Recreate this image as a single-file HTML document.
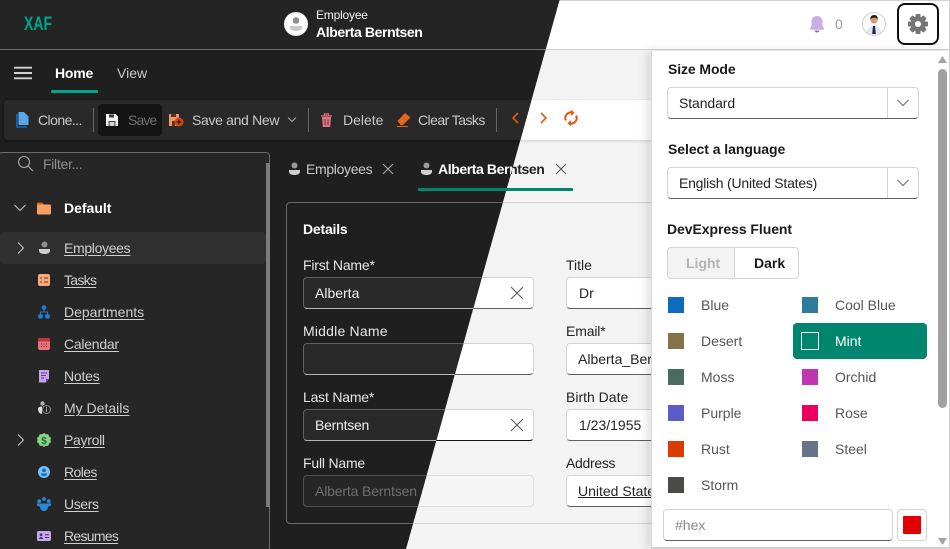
<!DOCTYPE html>
<html><head><meta charset="utf-8"><style>
html,body{margin:0;padding:0}
body{width:950px;height:549px;overflow:hidden;position:relative;font-family:"Liberation Sans",sans-serif;font-size:14px;background:#f3f3f3}
.l{position:absolute;inset:0;overflow:hidden;width:950px;height:549px}
#dark{background:#1f1f1f;color:#e6e6e6;clip-path:polygon(0 0,559.5px 0,406px 549px,0 549px)}
#light{background:#f3f3f3;color:#242424}
.a{position:absolute}
.t{position:absolute;line-height:20px;height:20px;white-space:nowrap}
.b{font-weight:700}
.in{position:absolute;box-sizing:border-box;height:32px;border-radius:4px;border:1px solid}
#dark .in{background:#292929;border-color:#5f5f5f;border-bottom-color:#b5b5b5}
#light .in{background:#fff;border-color:#d4d4d4;border-bottom-color:#616161}
svg{position:absolute;display:block}
.nav{text-decoration:underline;text-underline-offset:2px;color:#cfcfcf}
.sw{position:absolute;width:16px;height:16px}
.c{position:absolute;line-height:20px;height:20px;color:#555;white-space:nowrap}
</style></head><body>

<div class="l" id="light">
  <div class="a" style="left:0;top:0;width:950px;height:49px;background:#fff;border-top:1px solid #d1d1d1;box-sizing:border-box"></div>
  <div class="a" style="left:0;top:49px;width:950px;height:1px;background:#d1d1d1"></div>
  <div class="a" style="left:0;top:100px;width:660px;height:40px;background:#fff;box-shadow:0 1px 3px rgba(0,0,0,.15)"></div>
  <svg style="left:537px;top:110px" width="12" height="16" viewBox="0 0 12 16"><path d="M4 3l5 5-5 5" fill="none" stroke="#dd5a10" stroke-width="1.600"/></svg>
  <svg style="left:563px;top:110px" width="16" height="16" viewBox="0 0 16 16" fill="none" stroke="#dd5a10" stroke-width="2"><path d="M3 10.500A5.400 5.400 0 0 1 9.500 2.800M13 5.500a5.400 5.400 0 0 1-6.500 7.700"/><path d="M8 .5l2.500 2.300L8 5M8 11l-2.500 2.200L8 15.500" stroke-width="1.500"/></svg>

  <span class="t b" style="left:438px;top:159px;letter-spacing:-.4px">Alberta Berntsen</span>
  <svg style="left:555px;top:163px" width="12" height="12" viewBox="0 0 12 12"><path d="M1 1l10 10M11 1L1 11" stroke="#555" stroke-width="1"/></svg>
  <div class="a" style="left:418px;top:188px;width:155px;height:3px;background:#008571;border-radius:1px"></div>

  <div class="a" style="left:286px;top:202px;width:500px;height:322px;border:1px solid #d1d1d1;border-radius:4px;box-sizing:border-box"></div>
  <div class="in" style="left:303px;top:277px;width:231px"></div>
  <svg style="left:510px;top:286px" width="14" height="14" viewBox="0 0 14 14"><path d="M1 1l12 12M13 1L1 13" stroke="#555" stroke-width="1"/></svg>
  <div class="in" style="left:303px;top:343px;width:231px"></div>
  <div class="in" style="left:303px;top:409px;width:231px;border-bottom-color:#111"></div>
  <svg style="left:510px;top:418px" width="14" height="14" viewBox="0 0 14 14"><path d="M1 1l12 12M13 1L1 13" stroke="#555" stroke-width="1"/></svg>
  <div class="in" style="left:303px;top:475px;width:231px;border-color:#ddd;background:#f5f5f5"></div>

  <span class="t" style="left:566px;top:255px">Title</span>
  <div class="in" style="left:566px;top:277px;width:120px"></div><span class="t" style="left:579px;top:283px">Dr</span>
  <span class="t" style="left:566px;top:321px;letter-spacing:-.15px">Email*</span>
  <div class="in" style="left:566px;top:343px;width:120px"></div><span class="t" style="left:578px;top:349px">Alberta_Berntsen</span>
  <span class="t" style="left:566px;top:387px">Birth Date</span>
  <div class="in" style="left:566px;top:409px;width:120px"></div><span class="t" style="left:579px;top:415px">1/23/1955</span>
  <span class="t" style="left:566px;top:453px;letter-spacing:-.3px">Address</span>
  <div class="in" style="left:566px;top:475px;width:120px"></div><span class="t" style="left:578px;top:481px;text-decoration:underline">United States</span>

  <!-- header right -->
  <svg style="left:808px;top:15px" width="18" height="19" viewBox="0 0 18 19"><path d="M9 1C5.500 1 3.500 3.500 3.500 6.500v4L2 13.500c-.3.700 0 1.200.8 1.200h12.400c.8 0 1.100-.5.800-1.200l-1.500-3v-4C14.500 3.500 12.500 1 9 1z" fill="#c9aee6"/><path d="M6.500 15.500h5C11 17 10 17.500 9 17.500S7 17 6.500 15.500z" fill="#8f6bb8"/></svg>
  <span class="t" style="left:835px;top:14px;color:#9a9a9a">0</span>
  <svg style="left:862px;top:12px" width="24" height="24" viewBox="0 0 24 24"><circle cx="12" cy="12" r="11.500" fill="#fff" stroke="#cfcfcf"/><path d="M5 20c1-5 4-6.500 7-6.500s6 1.500 7 6.500c-2 2.500-5 3.500-7 3.500s-5-1-7-3.500z" fill="#e4e7f0"/><circle cx="12" cy="8" r="3.600" fill="#d69a7c"/><path d="M8.300 7.500C8 4.500 10 3 12.300 3c2.200 0 3.800 1.700 3.300 4.500-1-1.500-2-2-3.500-1.800-1.500.2-3 .5-3.800 1.800z" fill="#2a1a18"/><path d="M11 14h2l.8 8h-3.600z" fill="#1c2350"/></svg>
  <div class="a" style="left:897px;top:3px;width:42px;height:42px;box-sizing:border-box;border:2px solid #111;border-radius:8px;background:#fff"></div>
  <svg style="left:908px;top:14px" width="20" height="20" viewBox="0 0 20 20"><g fill="#767676"><rect x="7.500" y="0" width="5" height="20" rx="1"/><rect x="7.500" y="0" width="5" height="20" rx="1" transform="rotate(45 10 10)"/><rect x="7.500" y="0" width="5" height="20" rx="1" transform="rotate(90 10 10)"/><rect x="7.500" y="0" width="5" height="20" rx="1" transform="rotate(135 10 10)"/><circle cx="10" cy="10" r="7.500"/></g><circle cx="10" cy="10" r="3" fill="#fff"/></svg>

  <!-- popup -->
  <div class="a" style="left:651px;top:51px;width:299px;height:498px;background:#fff;border-left:1px solid #d8d8d8;box-sizing:border-box;box-shadow:-4px 0 10px rgba(0,0,0,.12)"></div>
  <div class="a" style="left:949px;top:0;width:1px;height:549px;background:#d1d1d1"></div>
  <div class="a" style="left:651px;top:547px;width:299px;height:2px;background:#d1d1d1"></div>

  <span class="t b" style="left:668px;top:59px;color:#1a1a1a;letter-spacing:-.1px">Size Mode</span>
  <div class="in" style="left:667px;top:87px;width:252px"></div>
  <div class="a" style="left:887px;top:88px;width:1px;height:30px;background:#d4d4d4"></div>
  <span class="t" style="left:679px;top:93px;color:#242424;letter-spacing:-.1px">Standard</span>
  <svg style="left:896px;top:98px" width="14" height="10" viewBox="0 0 14 10"><path d="M1.500 2l5.500 5.500L12.500 2" fill="none" stroke="#666"/></svg>

  <span class="t b" style="left:668px;top:139px;color:#1a1a1a;letter-spacing:-.06px">Select a language</span>
  <div class="in" style="left:667px;top:167px;width:252px"></div>
  <div class="a" style="left:887px;top:168px;width:1px;height:30px;background:#d4d4d4"></div>
  <span class="t" style="left:679px;top:173px;color:#242424;letter-spacing:-.22px">English (United States)</span>
  <svg style="left:896px;top:178px" width="14" height="10" viewBox="0 0 14 10"><path d="M1.500 2l5.500 5.500L12.500 2" fill="none" stroke="#666"/></svg>

  <span class="t b" style="left:667px;top:219px;color:#1a1a1a;letter-spacing:-.06px">DevExpress Fluent</span>
  <div class="a" style="left:667px;top:247px;width:132px;height:32px;box-sizing:border-box;border:1px solid #d4d4d4;border-radius:4px;background:#fff;overflow:hidden"><div class="a" style="left:0;top:0;width:66px;height:30px;background:#f3f3f3;border-right:1px solid #d4d4d4"></div></div>
  <span class="t b" style="left:686px;top:253px;color:#b4b4b4">Light</span>
  <span class="t b" style="left:754px;top:253px;color:#1a1a1a">Dark</span>

  <div class="a" style="left:793px;top:323px;width:134px;height:36px;background:#00856f;border-radius:4px"></div>

  <div class="sw" style="left:668px;top:297px;background:#0f6cbd"></div><span class="c" style="left:701px;top:295px">Blue</span>
  <div class="sw" style="left:802px;top:297px;background:#2e7b9c"></div><span class="c" style="left:835px;top:295px">Cool Blue</span>
  <div class="sw" style="left:668px;top:333px;background:#827447"></div><span class="c" style="left:701px;top:331px">Desert</span>
  <div class="sw" style="left:801px;top:332px;width:18px;height:18px;box-sizing:border-box;border:1px solid #fff;background:#00856f"></div><span class="c" style="left:835px;top:331px;color:#fff">Mint</span>
  <div class="sw" style="left:668px;top:369px;background:#4b6b60"></div><span class="c" style="left:701px;top:367px">Moss</span>
  <div class="sw" style="left:802px;top:369px;background:#c036b0"></div><span class="c" style="left:835px;top:367px">Orchid</span>
  <div class="sw" style="left:668px;top:405px;background:#5c5cc8"></div><span class="c" style="left:701px;top:403px">Purple</span>
  <div class="sw" style="left:802px;top:405px;background:#ea0060"></div><span class="c" style="left:835px;top:403px">Rose</span>
  <div class="sw" style="left:668px;top:441px;background:#da3b01"></div><span class="c" style="left:701px;top:439px">Rust</span>
  <div class="sw" style="left:802px;top:441px;background:#667489"></div><span class="c" style="left:835px;top:439px">Steel</span>
  <div class="sw" style="left:668px;top:477px;background:#4c4a48"></div><span class="c" style="left:701px;top:475px">Storm</span>

  <div class="in" style="left:663px;top:509px;width:230px"></div>
  <span class="t" style="left:675px;top:515px;color:#8a8a8a">#hex</span>
  <div class="a" style="left:897px;top:509px;width:30px;height:32px;box-sizing:border-box;border:1px solid #d4d4d4;border-radius:4px"></div>
  <div class="a" style="left:903px;top:516px;width:18px;height:18px;background:#e00000;border-radius:1px"></div>

  <svg style="left:938px;top:56px" width="9" height="7" viewBox="0 0 9 7"><path d="M4.500 0L9 7H0z" fill="#a3a3a3"/></svg>
  <div class="a" style="left:938px;top:69px;width:9px;height:339px;border-radius:5px;background:#a0a0a0"></div>
  <svg style="left:938px;top:538px" width="9" height="7" viewBox="0 0 9 7"><path d="M4.500 7L9 0H0z" fill="#a3a3a3"/></svg>
</div>

<div class="l" id="dark">
  <div class="a" style="left:0;top:0;width:950px;height:49px;background:#242424"></div>
  <div class="a" style="left:0;top:49px;width:950px;height:1px;background:#707070"></div>

  <span class="t b" style="left:24px;top:14px;color:#00a38c;font-size:19.500px;line-height:20px;transform:scaleX(.72);transform-origin:0 50%">XAF</span>

  <svg style="left:284px;top:12px" width="24" height="24" viewBox="0 0 24 24"><circle cx="12" cy="12" r="12" fill="#fff"/><circle cx="12" cy="8.500" r="3.300" fill="#8f8f8f"/><path d="M6 14h12v1.500c0 2.500-2.500 3.500-6 3.500s-6-1-6-3.500z" fill="#c9c9c9"/></svg>
  <span class="t" style="left:316px;top:5px;font-size:12px;color:#f2f2f2;letter-spacing:-.2px">Employee</span>
  <span class="t b" style="left:316px;top:22px;color:#fff;letter-spacing:-.4px">Alberta Berntsen</span>

  <svg style="left:14px;top:66px" width="18" height="14" viewBox="0 0 18 14"><path d="M0 1.700h18M0 7h18M0 12.300h18" stroke="#d0d0d0" stroke-width="1.900"/></svg>
  <span class="t b" style="left:55px;top:63px;color:#fff;letter-spacing:-.2px">Home</span>
  <div class="a" style="left:51px;top:90px;width:47px;height:3px;background:#00a38c;border-radius:1px"></div>
  <span class="t" style="left:117px;top:63px;color:#c8c8c8">View</span>

  <!-- toolbar -->
  <div class="a" style="left:4px;top:100px;width:640px;height:40px;background:#292929;border-radius:4px;box-shadow:0 1px 3px rgba(0,0,0,.4)"></div>
  <svg style="left:16px;top:111px" width="14" height="17" viewBox="0 0 14 17"><path d="M1 3v13h10" fill="none" stroke="#0f6cbd" stroke-width="1.600"/><path d="M2.500 1H8l4.500 4.500V14h-10z" fill="#5aa7e8"/></svg>
  <span class="t" style="left:38px;top:110px;color:#c8c8c8;letter-spacing:-.55px">Clone...</span>
  <div class="a" style="left:93px;top:108px;width:1px;height:24px;background:#666"></div>
  <div class="a" style="left:98px;top:104px;width:64px;height:32px;background:#141414;border-radius:4px"></div>
  <svg style="left:106px;top:114px" width="12" height="12" viewBox="0 0 12 12"><path d="M0 0h9.500L12 2.500V12H0z" fill="#f4f4f4"/><path d="M3 .5h5v3H3z" fill="#3a3a3a"/><path d="M2.500 7h7v5h-7z" fill="#3a3a3a"/><path d="M3.500 8h5v4h-5z" fill="#cfcfcf"/></svg>
  <span class="t" style="left:128px;top:110px;color:#6f6f6f;letter-spacing:-.9px">Save</span>
  <svg style="left:168px;top:113px" width="16" height="14" viewBox="0 0 16 14"><path d="M1 1h10v12H1z" fill="#f0946a"/><path d="M3 1h5v3H3zM4 8h3v5H4z" fill="#5a3526"/><circle cx="11" cy="9" r="4.500" fill="#d14a0a"/><path d="M11 6.800v4.400M8.800 9h4.400" stroke="#241710" stroke-width="1.200"/></svg>
  <span class="t" style="left:192px;top:110px;color:#c8c8c8;letter-spacing:-.33px">Save and New</span>
  <svg style="left:286px;top:116px" width="12" height="8" viewBox="0 0 12 8"><path d="M2 1.500l4 4 4-4" fill="none" stroke="#aaa"/></svg>
  <div class="a" style="left:308px;top:108px;width:1px;height:24px;background:#666"></div>
  <svg style="left:320px;top:113px" width="13" height="15" viewBox="0 0 13 15"><path d="M1 3h11M4.500 3V1h4v2" stroke="#e0737c" stroke-width="1.200" fill="none"/><path d="M2 4h9l-.8 10H2.800z" fill="#e0737c"/><path d="M5 6v6M8 6v6" stroke="#7d3138"/></svg>
  <span class="t" style="left:343px;top:110px;color:#c8c8c8">Delete</span>
  <svg style="left:396px;top:112px" width="15" height="16" viewBox="0 0 15 16"><path d="M9 1l5.500 4.500L7 13H4L1 9.500z" fill="#e2651a"/><path d="M1 14.500h11" stroke="#e2651a"/><path d="M1 9.500L4 13" stroke="#2a1a10"/></svg>
  <span class="t" style="left:418px;top:110px;color:#c8c8c8;letter-spacing:-.55px">Clear Tasks</span>
  <div class="a" style="left:496px;top:108px;width:1px;height:24px;background:#666"></div>
  <svg style="left:510px;top:110px" width="12" height="16" viewBox="0 0 12 16"><path d="M8 3L3 8l5 5" fill="none" stroke="#dd5a10" stroke-width="1.600"/></svg>

  <!-- tab row -->
  <svg style="left:289px;top:162px" width="11" height="14" viewBox="0 0 11 14"><circle cx="5.500" cy="3.500" r="3" fill="#9a9a9a"/><path d="M0 8h11v1.500C11 12 8.500 13 5.500 13S0 12 0 9.500z" fill="#d0d0d0"/></svg>
  <span class="t" style="left:306px;top:159px;color:#c8c8c8;letter-spacing:-.33px">Employees</span>
  <svg style="left:382px;top:163px" width="12" height="12" viewBox="0 0 12 12"><path d="M1 1l10 10M11 1L1 11" stroke="#b0b0b0"/></svg>
  <svg style="left:421px;top:162px" width="11" height="14" viewBox="0 0 11 14"><circle cx="5.500" cy="3.500" r="3" fill="#9a9a9a"/><path d="M0 8h11v1.500C11 12 8.500 13 5.500 13S0 12 0 9.500z" fill="#d0d0d0"/></svg>
  <span class="t b" style="left:438px;top:159px;color:#fff;letter-spacing:-.4px">Alberta Berntsen</span>
  <div class="a" style="left:418px;top:188px;width:155px;height:3px;background:#008571;border-radius:1px"></div>

  <!-- sidebar -->
  <div class="a" style="left:-2px;top:152px;width:272px;height:400px;box-sizing:border-box;background:#262626;border:1px solid #6b6b6b;border-radius:4px"></div>
  <div class="a" style="left:266px;top:163px;width:4px;height:344px;background:#7c7c7c"></div>
  <svg style="left:17px;top:155px" width="17" height="17" viewBox="0 0 17 17"><circle cx="7" cy="7" r="5.500" fill="none" stroke="#aaa" stroke-width="1.100"/><path d="M11 11l5 5" stroke="#aaa" stroke-width="1.100"/></svg>
  <span class="t" style="left:43px;top:154px;color:#8d8d8d;letter-spacing:-.3px">Filter...</span>

  <svg style="left:13px;top:203px" width="14" height="10" viewBox="0 0 14 10"><path d="M1.500 2l5.500 5.500L12.500 2" fill="none" stroke="#c0c0c0" stroke-width="1.100"/></svg>
  <svg style="left:37px;top:202px" width="14" height="13" viewBox="0 0 14 13"><path d="M0 2a1.500 1.500 0 0 1 1.500-1.500H5L7 2.500h5.500A1.500 1.500 0 0 1 14 4v7a1.500 1.500 0 0 1-1.500 1.500h-11A1.500 1.500 0 0 1 0 11z" fill="#f7a062"/><path d="M0 2a1.500 1.500 0 0 1 1.500-1.500H5L7 2.500H0z" fill="#d9600f"/></svg>
  <span class="t b" style="left:64px;top:198px;color:#fff">Default</span>

  <div class="a" style="left:0;top:232px;width:266px;height:32px;background:#2f2f2f;border-radius:4px"></div>
  <svg style="left:16px;top:241px" width="10" height="14" viewBox="0 0 10 14"><path d="M2 1.500L7.500 7 2 12.500" fill="none" stroke="#c0c0c0" stroke-width="1.100"/></svg>
  <svg style="left:39px;top:241px" width="11" height="14" viewBox="0 0 11 14"><circle cx="5.500" cy="3.500" r="3" fill="#8c8c8c"/><path d="M0 8h11v1.500C11 12 8.500 13 5.500 13S0 12 0 9.500z" fill="#cfcfcf"/></svg>
  <span class="t nav" style="left:64px;top:238px;letter-spacing:-.33px">Employees</span>

  <svg style="left:38px;top:274px" width="12" height="12" viewBox="0 0 12 12"><rect width="12" height="12" rx="2" fill="#f7a77c"/><path d="M2 4h2M6 4h4M2 8h2M6 8h4" stroke="#7a3d1c" stroke-width="1.100"/></svg>
  <span class="t nav" style="left:64px;top:270px;letter-spacing:-.7px">Tasks</span>

  <svg style="left:38px;top:305px" width="12" height="14" viewBox="0 0 12 14"><circle cx="6" cy="2.500" r="2.300" fill="#1a7fd6"/><circle cx="2.500" cy="11.300" r="2.500" fill="#1a7fd6"/><circle cx="9.500" cy="11.300" r="2.500" fill="#1a7fd6"/><path d="M6 4v3M2.500 9V7h7v2" fill="none" stroke="#1a7fd6"/></svg>
  <span class="t nav" style="left:64px;top:302px">Departments</span>

  <svg style="left:38px;top:338px" width="12" height="12" viewBox="0 0 12 12"><rect width="12" height="12" rx="2" fill="#e8757d"/><path d="M0 2a2 2 0 0 1 2-2h8a2 2 0 0 1 2 2v1.500H0z" fill="#c4313b"/><path d="M3 6h1M5.500 6h1M8 6h1M3 8.500h1M5.500 8.500h1M8 8.500h1" stroke="#5d1f24"/></svg>
  <span class="t nav" style="left:64px;top:334px;letter-spacing:-.25px">Calendar</span>

  <svg style="left:39px;top:369px" width="10" height="14" viewBox="0 0 10 14"><path d="M0 1h10v9l-3 3.500H0z" fill="#c5a5e6"/><path d="M2 4h6M2 6.500h5M2 9h3" stroke="#5e3f85"/><path d="M7 10h3l-3 3.500z" fill="#6f3fb0"/></svg>
  <span class="t nav" style="left:64px;top:366px;letter-spacing:-.2px">Notes</span>

  <svg style="left:37px;top:401px" width="15" height="14" viewBox="0 0 15 14"><circle cx="5.500" cy="2.500" r="2.200" fill="#b0b0b0"/><path d="M1 8c0-2 2-2.500 4-2.500L5 13C3 13 1 11 1 8z" fill="#dcdcdc"/><circle cx="9.500" cy="8.500" r="4" fill="#262626" stroke="#8a8a8a"/><path d="M9.500 7.500v3.200M9.500 5.800v.9" stroke="#b8b8b8"/></svg>
  <span class="t nav" style="left:64px;top:398px">My Details</span>

  <svg style="left:16px;top:433px" width="10" height="14" viewBox="0 0 10 14"><path d="M2 1.500L7.500 7 2 12.500" fill="none" stroke="#c0c0c0" stroke-width="1.100"/></svg>
  <svg style="left:37px;top:433px" width="14" height="14" viewBox="0 0 14 14"><path d="M7 0l2 1.200 2.300-.1.700 2.200L14 5l-.6 2 .6 2-2 1.700-.7 2.200-2.300-.1L7 14l-2-1.200-2.300.1-.7-2.200L0 9l.6-2L0 5l2-1.700.7-2.200 2.300.1z" fill="#8fd18b"/><text x="7" y="11" font-size="10" font-weight="700" font-family="Liberation Sans,sans-serif" text-anchor="middle" fill="#14742a">$</text></svg>
  <span class="t nav" style="left:64px;top:430px;letter-spacing:-.3px">Payroll</span>

  <svg style="left:38px;top:466px" width="12" height="12" viewBox="0 0 12 12"><circle cx="6" cy="6" r="6" fill="#79bff2"/><circle cx="6" cy="4.300" r="1.900" fill="#0f6cbd"/><path d="M2.800 7.500h6.400C9 9.500 7.500 10 6 10S3 9.500 2.800 7.500z" fill="#0f6cbd"/></svg>
  <span class="t nav" style="left:64px;top:462px;letter-spacing:-.6px">Roles</span>

  <svg style="left:37px;top:497px" width="14" height="14" viewBox="0 0 14 14"><g fill="#2b88d8"><circle cx="7" cy="2" r="1.900"/><circle cx="2.200" cy="4.200" r="1.900"/><circle cx="11.800" cy="4.200" r="1.900"/><path d="M0 6.500h14V8c0 1-1 1.500-3 1.500C11 12.500 9 14 7 14S3 12.500 3 9.500C1 9.500 0 9 0 8z"/></g></svg>
  <span class="t nav" style="left:64px;top:494px;letter-spacing:-.4px">Users</span>

  <svg style="left:37px;top:531px" width="14" height="11" viewBox="0 0 14 11"><rect width="14" height="10" rx="1.500" fill="#c7a8e8"/><circle cx="4" cy="3.800" r="1.400" fill="#4c2f72"/><path d="M2 8c0-1.500 1-2 2-2s2 .5 2 2z" fill="#4c2f72"/><path d="M8 3.800h4M8 6.500h4" stroke="#4c2f72"/></svg>
  <span class="t nav" style="left:64px;top:526px;letter-spacing:-.7px">Resumes</span>

  <!-- details -->
  <div class="a" style="left:286px;top:202px;width:500px;height:322px;border:1px solid #686868;border-radius:4px;box-sizing:border-box"></div>
  <span class="t b" style="left:303px;top:219px;color:#fff;letter-spacing:-.2px">Details</span>
  <span class="t" style="left:303px;top:255px;letter-spacing:-.2px">First Name*</span>
  <div class="in" style="left:303px;top:277px;width:231px"></div><span class="t" style="left:315px;top:283px;color:#f0f0f0">Alberta</span>
  <span class="t" style="left:303px;top:321px;letter-spacing:.2px">Middle Name</span>
  <div class="in" style="left:303px;top:343px;width:231px"></div>
  <span class="t" style="left:303px;top:387px;letter-spacing:-.2px">Last Name*</span>
  <div class="in" style="left:303px;top:409px;width:231px"></div><span class="t" style="left:315px;top:415px;color:#f0f0f0;letter-spacing:-.25px">Berntsen</span>
  <span class="t" style="left:303px;top:453px;letter-spacing:-.2px">Full Name</span>
  <div class="in" style="left:303px;top:475px;width:231px;border-color:#505050;background:#262626"></div><span class="t" style="left:315px;top:481px;color:#6d6d6d;letter-spacing:-.15px">Alberta Berntsen</span>
</div>
</body></html>
